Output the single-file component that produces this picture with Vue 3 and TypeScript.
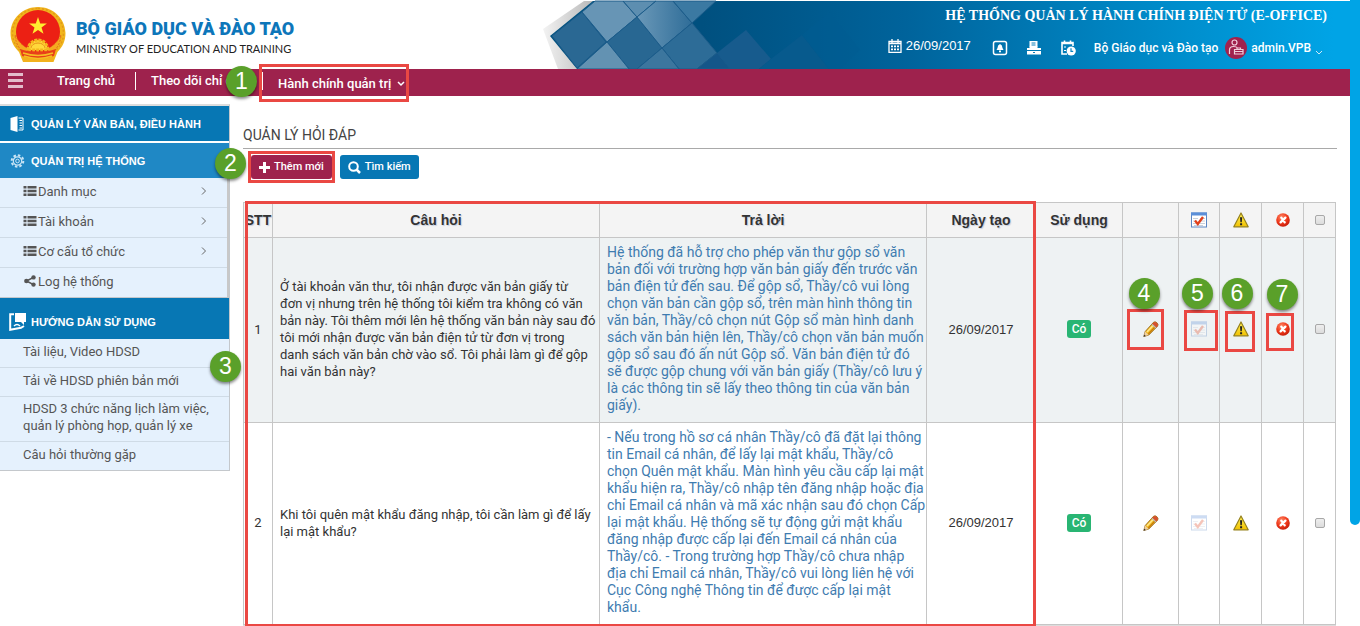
<script setup lang="ts">
import { ref } from 'vue'

interface MenuItem { label: string; icon?: 'list' | 'share'; arrow?: boolean }
interface Row { id: number; question: string; answer: string; date: string; noted: boolean }

const systemMenu: MenuItem[] = [
  { label: 'Danh mục', icon: 'list', arrow: true },
  { label: 'Tài khoản', icon: 'list', arrow: true },
  { label: 'Cơ cấu tổ chức', icon: 'list', arrow: true },
  { label: 'Log hệ thống', icon: 'share' },
]
const guideMenu: string[] = [
  'Tài liệu, Video HDSD',
  'Tải về HDSD phiên bản mới',
  'HDSD 3 chức năng lịch làm việc, quản lý phòng họp, quản lý xe',
  'Câu hỏi thường gặp',
]
const rows: Row[] = [
  {
    id: 1,
    question: `Ở tài khoản văn thư, tôi nhận được văn bản giấy từ
đơn vị nhưng trên hệ thống tôi kiểm tra không có văn
bản này. Tôi thêm mới lên hệ thống văn bản này sau đó
tôi mới nhận được văn bản điện tử từ đơn vị trong
danh sách văn bản chờ vào sổ. Tôi phải làm gì để gộp
hai văn bản này?`,
    answer: `Hệ thống đã hỗ trợ cho phép văn thư gộp sổ văn
bản đối với trường hợp văn bản giấy đến trước văn
bản điện tử đến sau. Để gộp sổ, Thầy/cô vui lòng
chọn văn bản cần gộp sổ, trên màn hình thông tin
văn bản, Thầy/cô chọn nút Gộp sổ màn hình danh
sách văn bản hiện lên, Thầy/cô chọn văn bản muốn
gộp sổ sau đó ấn nút Gộp sổ. Văn bản điện tử đó
sẽ được gộp chung với văn bản giấy (Thầy/cô lưu ý
là các thông tin sẽ lấy theo thông tin của văn bản
giấy).`,
    date: '26/09/2017',
    noted: true,
  },
  {
    id: 2,
    question: `Khi tôi quên mật khẩu đăng nhập, tôi cần làm gì để lấy
lại mật khẩu?`,
    answer: `- Nếu trong hồ sơ cá nhân Thầy/cô đã đặt lại thông
tin Email cá nhân, để lấy lại mật khẩu, Thầy/cô
chọn Quên mật khẩu. Màn hình yêu cầu cấp lại mật
khẩu hiện ra, Thầy/cô nhập tên đăng nhập hoặc địa
chỉ Email cá nhân và mã xác nhận sau đó chọn Cấp
lại mật khẩu. Hệ thống sẽ tự động gửi mật khẩu
đăng nhập được cấp lại đến Email cá nhân của
Thầy/cô. - Trong trường hợp Thầy/cô chưa nhập
địa chỉ Email cá nhân, Thầy/cô vui lòng liên hệ với
Cục Công nghệ Thông tin để được cấp lại mật
khẩu.`,
    date: '26/09/2017',
    noted: false,
  },
]
const selected = ref<number[]>([])
const allSelected = ref(false)
</script>

<template>
  <div class="page">
    <svg class="defs" width="0" height="0" aria-hidden="true">
      <defs>
        <linearGradient id="gYellow" x1="0" y1="0" x2="0" y2="1"><stop offset="0" stop-color="#fff05a" /><stop offset="1" stop-color="#f2c200" /></linearGradient>
        <radialGradient id="gRed" cx=".4" cy=".3" r=".8"><stop offset="0" stop-color="#ff8a68" /><stop offset=".5" stop-color="#f03a1c" /><stop offset="1" stop-color="#bb1505" /></radialGradient>
        <symbol id="i-list" viewBox="0 0 13 10">
          <path fill="currentColor" d="M0 0h3v2.400H0zM4 0h9v2.400H4zM0 3.800h3v2.400H0zM4 3.800h9v2.400H4zM0 7.600h3V10H0zM4 7.600h9V10H4z" />
        </symbol>
        <symbol id="i-share" viewBox="0 0 12 12">
          <path d="M9.500 2.400 2.500 6l7 3.600" fill="none" stroke="currentColor" stroke-width="1.600" />
          <circle cx="9.500" cy="2.400" r="2.200" fill="currentColor" /><circle cx="2.400" cy="6" r="2.300" fill="currentColor" /><circle cx="9.500" cy="9.600" r="2.200" fill="currentColor" />
        </symbol>
        <symbol id="i-check" viewBox="0 0 16 16">
          <rect x=".5" y="1" width="15" height="14" fill="#fff" stroke="#5b86c4" />
          <path d="M0 .5h16V3.500H0z" fill="#5b8fd8" />
          <path d="M2 6.500h5M9 6.500h5M2 9h3M9.500 9H14M2 11.500h3M9 11.500h5M3 13.500h9" stroke="#c9d0da" stroke-width="1" />
          <path d="M4 8.500 6.800 12 12 5" fill="none" stroke="#e0401c" stroke-width="2.400" />
        </symbol>
        <symbol id="i-warn" viewBox="0 0 16 16">
          <path d="M8 1 15.200 14.800H.8z" fill="url(#gYellow)" stroke="#95811c" stroke-width="1.200" stroke-linejoin="round" />
          <path d="M7 5.200h2.200l-.4 5H7.400zM7.100 11.300h2v2h-2z" fill="#222" />
        </symbol>
        <symbol id="i-delete" viewBox="0 0 14 14">
          <circle cx="7" cy="7" r="6.800" fill="url(#gRed)" />
          <path d="m5.300 4.600 3.400 4.800m.7-4.800L4.600 9.400" stroke="#fff" stroke-width="2.300" stroke-linecap="round" />
        </symbol>
        <symbol id="i-pencil" viewBox="0 0 16 16">
          <path d="M.8 15.500 2.200 10.500 10.500 1.300q1.600-1.300 3.400.4t.8 3.400L5.800 14z" fill="#f0b71d" stroke="#8a5a14" stroke-width=".8" />
          <path d="m4 11 8-8.500" stroke="#ffe88a" stroke-width="1.600" />
          <path d="m5.400 13 8-8.600" stroke="#c47a0c" stroke-width="1.200" />
          <path d="M10.600 1.500q1.500-1.200 3.300.4t.7 3.100l-1.300 1.400-4-3.500z" fill="#d5512f" />
          <path d="m9.300 2.900 4 3.500-.9.900-3.900-3.500z" fill="#b9b9b9" />
          <path d="m2.200 10.500 3.400 3.500-4.800 1.500z" fill="#eed0a0" /><path d="m1.300 13.400 1.500 1.500-2.200.8z" fill="#333" />
        </symbol>
      </defs>
    </svg>

    <header class="header">
      <a class="brand" href="#">
        <svg class="emblem" viewBox="0 0 56 56" aria-hidden="true">
          <path d="M28 0C43 0 55 11 55.500 26c0 8-3 14-8 19l-4 10H13L9 45C4 40 .5 34 .5 26 1 11 13 0 28 0" fill="#f1b51c" />
          <path d="M28 1.500C42 1.500 53.500 12 53.500 26 53.500 36 48 43 41 46H15C8 43 2.500 36 2.500 26 2.500 12 14 1.500 28 1.500" fill="none" stroke="#e29a18" stroke-width="1.500" stroke-dasharray="2 2" />
          <circle cx="28" cy="25" r="22" fill="#ec2014" />
          <path d="m28 10 2.200 6.400h6.700l-5.400 4 2 6.400-5.500-3.900-5.500 3.900 2-6.400-5.400-4h6.700z" fill="#ffee30" />
          <path d="M5 28q5 10 14 14l-3 5Q6 41 5 28M51 28q-5 10-14 14l3 5q10-6 11-19" fill="#f5a920" stroke="#e05a1c" stroke-width=".8" stroke-dasharray="2 1.500" />
          <path d="M18 43a10 10 0 0 1 20 0z" fill="#ffd83a" stroke="#f3b51c" stroke-width="3" stroke-dasharray="3 1" />
          <path d="M21 41a7 5 0 0 1 14 0" fill="none" stroke="#e89018" stroke-width="1" />
          <path d="M10 42q8 3 18 3t18-3l-2 7q-8 3-16 3t-16-3z" fill="#e8401a" />
          <path d="M13 46q15 5 30 0M14 49q14 5 28 0" stroke="#f6bf23" stroke-width="1.500" fill="none" />
          <path d="M13 50q15 4 30 0v5l-7-1-8 1-8-1-7 1z" fill="#f3b01e" />
        </svg>
        <span class="brand-text">
          <span class="brand-name">BỘ GIÁO DỤC VÀ ĐÀO TẠO</span>
          <span class="brand-sub">MINISTRY OF EDUCATION AND TRAINING</span>
        </span>
      </a>
      <div class="banner">
        <svg class="tiles" viewBox="0 0 330 69" aria-hidden="true">
          <defs>
            <linearGradient id="halo" x1="0" y1="0" x2="1" y2="0"><stop offset="0" stop-color="#f3f3f3" /><stop offset="1" stop-color="#b5b5b5" /></linearGradient>
            <linearGradient id="fade" x1="0" y1="0" x2="1" y2="0"><stop offset="0" stop-color="#6a98b8" /><stop offset="1" stop-color="#2f6d98" /></linearGradient>
          </defs>
          <path d="M0 1h54v68H0z" fill="#fff" />
          <path d="M3 29 44 1h12v68H18z" fill="url(#halo)" />
          <path d="M10 36 53 1h20v68H37z" fill="#00517f" />
          <g stroke="#1c5c8a" stroke-width="1">
            <path d="M12 36 42 12l24 30-29 26z" fill="#2a6893" />
            <path d="M42 12 55 1h28l14 16-30 25z" fill="#6795b5" />
            <path d="m67 42 30-25 25 31-25 21H89z" fill="#286792" />
            <path d="m67 42 22 27H37z" fill="#6392b2" />
            <path d="M83 1h33L97 17z" fill="#5d8eb0" />
            <path d="M97 17 116 1h17l19 22-30 25z" fill="url(#fade)" />
            <path d="M133 1h43l-24 22z" fill="#3b79a2" />
            <path d="m122 48 30-25 25 30-20 16h-18z" fill="#2d6c97" />
            <path d="m122 48 17 21H97z" fill="#3c769e" />
            <path d="m177 53 13 16h-33z" fill="#145689" />
          </g>
          <path d="m177 53 29-23 25 29-12 10h-29z" fill="#175b8d" />
          <path d="m231 59 31-24 27 34h-70z" fill="#075a8d" />
          <path d="m262 35 27-23 31 38-20 19h-11z" fill="#005b91" opacity=".5" />
        </svg>
        <h1 class="system-name">HỆ THỐNG QUẢN LÝ HÀNH CHÍNH ĐIỆN TỬ (E-OFFICE)</h1>
        <div class="tools">
          <span class="today">
            <svg width="14" height="14" viewBox="0 0 14 14" aria-hidden="true"><path d="M1 2.500h12v10.800H1zM1 4.500h12M4 0v4M10 0v4" fill="none" stroke="#fff" stroke-width="1.300" /><path d="M3 6.500h2v1.700H3zM6 6.500h2v1.700H6zM9 6.500h2v1.700H9zM3 9.500h2v1.700H3zM6 9.500h2v1.700H6zM9 9.500h2v1.700H9z" fill="#fff" /></svg>
            26/09/2017
          </span>
          <button class="tool" aria-label="Thông báo"><svg width="16" height="16" viewBox="0 0 16 16"><rect x="1.500" y="1.500" width="13" height="13" rx="2" fill="none" stroke="#fff" stroke-width="1.500" /><path d="M8 4q2.500 1 2.500 4l1 2h-7l1-2Q5.500 5 8 4M7 10.500h2v1.700H7z" fill="#fff" /></svg></button>
          <button class="tool" aria-label="In"><svg width="16" height="16" viewBox="0 0 16 16"><path d="M3.500 1h8v5.500h-8zM1 8h14v2H1zM1 11h14v3.500H1z" fill="#fff" /><path d="M5.500 3h4M5.500 5h4M7 12.500h2" stroke="#1080b8" stroke-width="1" /><path d="M3.500 6h8v2h-8z" fill="#fff" /></svg></button>
          <button class="tool" aria-label="Lịch"><svg width="16" height="16" viewBox="0 0 16 16"><path d="M7 14H2V2.500h11V6M2 3.500h11M4.500.5v3M10.500.5v3" fill="none" stroke="#fff" stroke-width="1.600" /><path d="M4 7h2M4 10.500h2" stroke="#fff" /><circle cx="11.200" cy="11" r="4.600" fill="#fff" /><path d="M11 8.300v3h2.200" fill="none" stroke="#0a84c2" stroke-width="1.200" /></svg></button>
          <span class="unit">Bộ Giáo dục và Đào tạo</span>
          <button class="user">
            <svg width="22" height="22" viewBox="0 0 22 22" aria-hidden="true"><circle cx="11" cy="11" r="11" fill="#a0214d" /><circle cx="9.500" cy="5.500" r="2.500" fill="none" stroke="#f1cfdb" stroke-width="1.200" /><path d="M4.500 17v-4q0-3.500 4-3.500 3 0 4 1.500M9.500 12.500h8.500V17H9.500zM12 12.500V11h3.500v1.500M9.500 14.500H18" fill="none" stroke="#f1cfdb" stroke-width="1.200" /></svg>
            <span>admin.VPB</span>
            <svg class="user-caret" width="8" height="5" viewBox="0 0 8 5" aria-hidden="true"><path d="m1 1 3 3 3-3" fill="none" stroke="#cfe9f7" /></svg>
          </button>
        </div>
      </div>
    </header>

    <nav class="nav">
      <button class="burger" aria-label="Menu"><i></i><i></i><i></i></button>
      <a class="nav-item home" href="#">Trang chủ</a>
      <a class="nav-item follow" href="#">Theo dõi chỉ đạo<span class="step step-1">1</span></a>
      <a class="nav-item admin" href="#">Hành chính quản trị
        <svg width="8" height="6" viewBox="0 0 8 6" aria-hidden="true"><path d="m1 1 3 3 3-3" fill="none" stroke="#fff" stroke-width="1.500" /></svg>
        <span class="mark mark-nav"></span>
      </a>
    </nav>

    <div class="body">
      <aside class="side">
        <a class="side-head" href="#">
          <svg width="14" height="16" viewBox="0 0 14 16" aria-hidden="true"><path d="M0 2 7 0v16l-7-2z" fill="#fff" /><path d="M8 2h4.500v12H8M9 4.500h2.500M9 7h2.500M9 9.500h2.500M9 12h2.500" fill="none" stroke="#fff" /></svg>
          <span>QUẢN LÝ VĂN BẢN, ĐIỀU HÀNH</span>
        </a>
        <a class="side-head current" href="#">
          <svg width="14" height="14" viewBox="0 0 14 14" aria-hidden="true"><circle cx="7" cy="7" r="5.800" fill="none" stroke="#c8e4f5" stroke-width="2" stroke-dasharray="2.500 2" /><circle cx="7" cy="7" r="4.200" fill="none" stroke="#c8e4f5" stroke-width="1.200" /><circle cx="7" cy="7" r="1.800" fill="none" stroke="#c8e4f5" /></svg>
          <span>QUẢN TRỊ HỆ THỐNG</span>
          <span class="step step-2">2</span>
        </a>
        <ul class="menu system">
          <li v-for="item in systemMenu" :key="item.label">
            <a href="#">
              <svg v-if="item.icon === 'list'" width="14" height="10"><use href="#i-list" /></svg>
              <svg v-else width="14" height="12"><use href="#i-share" /></svg>
              <span>{{ item.label }}</span>
              <svg v-if="item.arrow" class="arrow" width="6" height="8" viewBox="0 0 6 8"><path d="m1 .5 3.500 3.500L1 7.500" fill="none" stroke="#666" /></svg>
            </a>
          </li>
        </ul>
        <a class="side-head guide" href="#">
          <svg width="17" height="18" viewBox="0 0 17 18" aria-hidden="true"><path d="M5 1.200H1.200v15.500L12 14.800l3-1.800" fill="none" stroke="#fff" stroke-width="2" /><path d="M6 0h11v9h-2v3l-3-3H6z" fill="#fff" /><path d="M5 13q3-3 6 0" stroke="#fff" stroke-width="1.500" fill="none" /></svg>
          <span>HƯỚNG DẪN SỬ DỤNG</span>
        </a>
        <div class="guide-body">
          <ul class="menu">
            <li v-for="label in guideMenu" :key="label"><a href="#"><span>{{ label }}</span></a></li>
          </ul>
          <span class="step step-3">3</span>
        </div>
      </aside>

      <main class="main">
        <h2 class="title">QUẢN LÝ HỎI ĐÁP</h2>
        <div class="actions">
          <button class="btn add">
            <svg width="11" height="11" viewBox="0 0 11 11" aria-hidden="true"><path d="M5.500 0v11M0 5.500h11" stroke="#fff" stroke-width="3" /></svg>
            Thêm mới<span class="mark mark-add"></span>
          </button>
          <button class="btn">
            <svg width="13" height="13" viewBox="0 0 13 13" aria-hidden="true"><circle cx="5.500" cy="5.500" r="4.300" fill="none" stroke="#fff" stroke-width="2" /><path d="m8.500 8.500 3.500 3.500" stroke="#fff" stroke-width="2.500" /></svg>
            Tìm kiếm
          </button>
        </div>
        <div class="table-wrap">
          <table>
            <colgroup><col class="w-no"><col><col><col class="w-date"><col class="w-use"><col class="w-edit"><col class="w-approve"><col class="w-icon"><col class="w-icon"><col class="w-tick"></colgroup>
            <thead>
              <tr>
                <th>STT</th><th>Câu hỏi</th><th>Trả lời</th><th>Ngày tạo</th><th>Sử dụng</th><th></th>
                <th><svg width="16" height="16"><use href="#i-check" /></svg></th>
                <th><svg width="16" height="16"><use href="#i-warn" /></svg></th>
                <th><svg width="14" height="14"><use href="#i-delete" /></svg></th>
                <th><input v-model="allSelected" type="checkbox" aria-label="Chọn tất cả"></th>
              </tr>
            </thead>
            <tbody>
              <tr v-for="row in rows" :key="row.id">
                <td class="mid">{{ row.id }}</td>
                <td class="question">{{ row.question }}</td>
                <td class="answer"><a href="#">{{ row.answer }}</a></td>
                <td class="mid date">{{ row.date }}</td>
                <td class="mid"><span class="tag">Có</span></td>
                <td class="mid"><button class="act" aria-label="Sửa"><svg width="16" height="16"><use href="#i-pencil" /></svg><template v-if="row.noted"><span class="mark mark-4"></span><span class="step step-4">4</span></template></button></td>
                <td class="mid"><button class="act" aria-label="Duyệt"><svg class="dim" width="16" height="16"><use href="#i-check" /></svg><template v-if="row.noted"><span class="mark mark-5"></span><span class="step step-5">5</span></template></button></td>
                <td class="mid"><button class="act" aria-label="Cảnh báo"><svg width="16" height="16"><use href="#i-warn" /></svg><template v-if="row.noted"><span class="mark mark-6"></span><span class="step step-6">6</span></template></button></td>
                <td class="mid"><button class="act" aria-label="Xóa"><svg width="14" height="14"><use href="#i-delete" /></svg><template v-if="row.noted"><span class="mark mark-7"></span><span class="step step-7">7</span></template></button></td>
                <td class="mid"><input v-model="selected" :value="row.id" type="checkbox" :aria-label="'Chọn ' + row.id"></td>
              </tr>
            </tbody>
          </table>
          <span class="mark mark-table"></span>
        </div>
      </main>
    </div>
    <div class="scroll-thumb"></div>
  </div>
</template>

<style>
body { background: #fff; }
</style>

<style scoped>
* { box-sizing: border-box; }
.page { position: relative; font-family: "Liberation Sans", Arial, sans-serif; font-size: 13px; color: #333; padding-right: 10px; }
.defs { position: absolute; }
a { color: inherit; text-decoration: none; }
button { font: inherit; color: inherit; border: 0; background: none; padding: 0; cursor: pointer; }
ul { list-style: none; margin: 0; padding: 0; }
svg { display: block; flex: none; }

.header { display: flex; height: 69px; padding-top: 1px; }
.brand { flex: none; display: flex; gap: 10px; width: 540px; padding: 6px 0 0 10px; }
.emblem { width: 56px; height: 56px; }
.brand-text { display: flex; flex-direction: column; padding-top: 9px; white-space: nowrap; }
.brand-name { font: 900 18px/26px Roboto, sans-serif; color: #0d76ba; }
.brand-sub { font: 11px/14px Lato, sans-serif; color: #222; }
.banner { position: relative; flex: 1; display: flex; flex-direction: column; align-items: flex-end; padding-right: 23px; color: #fff; background: linear-gradient(90deg, #00507f 20%, #00639b 45%, #0083c0 70%, #00a4e6 98%); }
.tiles { position: absolute; left: 0; top: -1px; width: 330px; height: 69px; }
.system-name { position: relative; margin: 5px 0 0; font: bold 14px/20px "Liberation Serif", serif; white-space: nowrap; }
.tools { position: relative; display: flex; align-items: center; height: 28px; margin-top: 8px; white-space: nowrap; font: 500 12px/16px Roboto, sans-serif; }
.today { display: flex; align-items: center; gap: 4px; margin: 0 21px 4px 0; font: 13px/16px "Liberation Sans", sans-serif; }
.tool { margin-right: 18px; }
.unit { margin-right: 7px; }
.user { display: flex; align-items: center; gap: 4px; margin-right: 4px; }
.user-caret { margin-top: 8px; }

.nav { display: flex; height: 27px; background: #9e224d; color: #fff; font: 500 13px/24px Roboto, sans-serif; white-space: nowrap; }
.burger { display: flex; flex-direction: column; gap: 3px; width: 15px; margin: 4px 34px 0 8px; }
.burger i { display: block; height: 3px; background: #e3bccb; }
.nav-item { position: relative; display: block; }
.home { width: 78px; }
.follow { width: 127px; padding-left: 16px; }
.admin { display: flex; align-items: center; gap: 6px; padding-left: 16px; padding-top: 3px; }
.follow::before, .admin::before { content: ""; position: absolute; left: 0; top: 3px; width: 1px; height: 18px; background: #fff; }

.body { display: flex; align-items: flex-start; }
.side { flex: none; width: 230px; margin-top: 8px; border-top: 2px solid #ddd; border-right: 1px solid #c4c8cc; border-bottom: 1px solid #c4c8cc; }
.side-head { position: relative; display: flex; align-items: center; height: 35px; padding-left: 9px; background: #0777b4; color: #fff; font: bold 11px/16px "Liberation Sans", sans-serif; }
.side-head svg { width: 17px; margin-right: 5px; }
.side-head.current { margin-top: 2px; background: #1f88c5; }
.side-head.guide { height: 41px; padding-top: 6px; }
.menu { background: #e5f1fd; color: #555; font: 13px/17px Roboto, sans-serif; }
.menu.system { border-bottom: 1px solid #c4c8cc; border-right: 2px solid #c8c8c8; }
.menu li + li { border-top: 1px solid #cfdbe6; }
.menu a { display: flex; align-items: center; gap: 1px; min-height: 28px; padding: 3px 20px 7px 23px; }
.menu.system a { min-height: 29px; padding: 3px 20px 6px 23px; }
.arrow { margin-left: auto; }
.guide-body { position: relative; }

.main { flex: 1; min-width: 0; padding: 0 13px; }
.title { margin: 0; padding: 29px 0 3px; border-bottom: 1px solid #a9a9a9; font: 400 14px/20px Roboto, sans-serif; color: #444; }
.actions { display: flex; gap: 8px; padding: 6px 0 0 8px; }
.btn { position: relative; display: flex; align-items: center; justify-content: center; gap: 4px; height: 24px; padding: 0 8px; border-radius: 3px; background: #0777b4; color: #fff; font: 500 11px/16px Roboto, sans-serif; white-space: nowrap; }
.btn.add { background: #9e224d; }

.table-wrap { position: relative; margin: 23px 1px 0 0; border-bottom: 1px solid #ddd; }
table { width: 100%; table-layout: fixed; border-collapse: collapse; }
.w-no { width: 29px; } .w-date { width: 109px; } .w-use { width: 87px; } .w-edit { width: 56px; } .w-approve { width: 41px; } .w-icon { width: 42px; } .w-tick { width: 32px; }
th, td { border: 1px solid #c6c6c6; }
th { height: 35px; padding: 0; background: #f4f4f4; font-size: 14px; line-height: 20px; text-shadow: 1px 1px 1px #c5cddd; }
th svg { margin: 0 auto; }
td { padding: 6px 0 8px 7px; line-height: 17px; vertical-align: middle; font-family: Roboto, sans-serif; }
td.mid { padding: 6px 0 8px; text-align: center; }
td.date { font-family: "Liberation Sans", Arial, sans-serif; }
tbody tr:first-child { background: #eef2f3; }
.question, .answer { white-space: pre; }
.answer { font-size: 14px; color: #3f7cb0; }
.tag { display: inline-block; padding: 0 5px; border-radius: 3px; background: #29b573; color: #fff; font: 500 12px/18px Roboto, sans-serif; }
.act { position: relative; display: block; margin: 0 auto; }
.dim { opacity: .3; }
input[type="checkbox"] { appearance: none; display: block; width: 10px; height: 10px; margin: 0 auto; border: 1px solid #a8a8a8; border-radius: 2px; background: linear-gradient(#eee, #dcdcdc); }
input[type="checkbox"]:checked { background: #0777b4; }

.step { position: absolute; z-index: 3; width: 31px; height: 31px; border-radius: 50%; background: #5aa02a; color: #fff; font: 400 23px/31px "Liberation Sans", sans-serif; text-align: center; box-shadow: 0 2px 3px rgba(0, 0, 0, .45); }
.mark { position: absolute; z-index: 2; border: 3px solid #ea4843; pointer-events: none; }
.step-1 { left: 91px; top: -3px; }
.step-2 { left: 215px; top: 5px; }
.step-3 { left: 210px; top: 12px; }
.mark-nav { left: -3px; right: -4px; top: -5px; height: 38px; }
.mark-add { inset: -4px -3px; }
.step-4, .step-5, .step-6, .step-7 { left: -9px; top: -43px; }
.step-4 { left: -14px; }
.step-6 { left: -11px; }
.mark-4 { left: -16px; top: -12px; width: 37px; height: 41px; }
.mark-5 { left: -7px; top: -11px; width: 34px; height: 41px; }
.mark-6 { left: -8px; top: -10px; width: 30px; height: 41px; }
.mark-7 { left: -10px; top: -9px; width: 28px; height: 38px; }
.mark-table { left: 2px; right: 300px; top: -1px; bottom: -2px; }

.scroll-thumb { position: absolute; right: 0; top: 0; width: 10px; height: 525px; border-radius: 0 0 5px 5px; background: #00a4e6; }
</style>
